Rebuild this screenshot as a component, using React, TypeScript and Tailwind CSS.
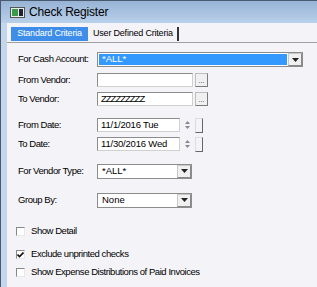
import { ReactNode } from 'react';

const font = { fontFamily: '"Liberation Sans", Arial, sans-serif' };

function Label({ children }: { children: ReactNode }) {
    return <div className="w-[79px] shrink-0 whitespace-nowrap text-[9.5px] tracking-[-0.45px] text-black">{children}</div>;
}

function DropArrow() {
    return (
        <div className="flex h-full w-[14px] items-center justify-center border border-[#c8c8c8] border-r-[#888] border-b-[#888] bg-[#f0f0f0]">
            <svg width="7" height="4" viewBox="0 0 7 4">
                <path d="M0 0h7L3.5 4z" fill="#222" />
            </svg>
        </div>
    );
}

function Select({ value, width, selected }: { value: string; width: string; selected?: boolean }) {
    return (
        <div className={`flex h-[15px] items-stretch border border-[#8c8c8c] bg-white ${width}`}>
            <div className="flex flex-1 items-center p-[1px]">
                <div className={`flex h-full flex-1 items-center whitespace-nowrap px-[3px] text-[9.5px] ${selected ? 'bg-[#3399ff] text-white' : 'text-black'}`}>
                    {value}
                </div>
            </div>
            <DropArrow />
        </div>
    );
}

function TextBox({ value, width, tight }: { value?: string; width: string; tight?: boolean }) {
    return (
        <div className={`flex h-[14px] items-center overflow-hidden whitespace-nowrap border border-[#8c8c8c] border-r-[#d0d0d0] border-b-[#d0d0d0] bg-white px-[3px] text-[9.5px] text-black ${tight ? 'tracking-[-1px]' : 'tracking-[-0.2px]'} ${width}`}>
            {value}
        </div>
    );
}

function DotsButton() {
    return (
        <div className="ml-[2px] flex h-[14px] w-[13px] items-end justify-center border border-[#bdbdbd] border-r-[#7a7a7a] border-b-[#7a7a7a] bg-[#f0f0f0] pb-[2px] text-[7px] leading-none text-[#333]">
            ...
        </div>
    );
}

function Spinner() {
    return (
        <div className="ml-[3px] flex items-center">
            <div className="flex w-[8px] flex-col items-center gap-[2px]">
                <svg width="5" height="3" viewBox="0 0 5 3"><path d="M0 3L2.5 0L5 3z" fill="#888" /></svg>
                <svg width="5" height="3" viewBox="0 0 5 3"><path d="M0 0h5L2.5 3z" fill="#888" /></svg>
            </div>
            <div className="ml-[4px] h-[15px] w-[8px] border-r border-b border-[#666] border-l border-l-[#ddd] border-t border-t-[#ddd]" />
        </div>
    );
}

function Check({ checked, label, className }: { checked?: boolean; label: string; className?: string }) {
    return (
        <div className={`flex h-[10px] items-center ${className ?? ''}`}>
            <div className="flex h-[9px] w-[9px] items-center justify-center border-l border-t border-[#888] border-r-[#e8e8e8] border-b-[#e8e8e8] border-r border-b bg-white">
                {checked && (
                    <svg width="7" height="6" viewBox="0 0 7 6">
                        <path d="M0.5 2.5L2.5 4.5L6.5 0.5" stroke="#111" strokeWidth="1.6" fill="none" />
                    </svg>
                )}
            </div>
            <span className="ml-[6px] whitespace-nowrap text-[9.5px] tracking-[-0.45px] text-black">{label}</span>
        </div>
    );
}

export default function App() {
    return (
        <div className="h-[287px] w-[317px] overflow-hidden bg-white" style={font}>
            <div className="flex h-full flex-col border-l border-t border-[#4a5a6e] bg-[#c3d6ec]">
                {/* Title bar */}
                <div className="flex h-[22px] shrink-0 items-center bg-gradient-to-b from-[#97b3d5] to-[#b9d0ea] pl-[9px]">
                    <div className="flex h-[11px] w-[15px] items-center border border-[#555] bg-[#e8ece8] px-[1px]">
                        <div className="h-[7px] w-[6px] bg-[#3a9a4a]" />
                        <div className="ml-[1px] h-[7px] w-[4px] bg-[#223]" />
                    </div>
                    <span className="ml-[4px] whitespace-nowrap text-[12px] tracking-[-0.2px] text-black">Check Register</span>
                </div>
                {/* Body */}
                <div className="ml-[6px] flex flex-1 flex-col bg-[#f4f3f7]">
                    {/* Tabs */}
                    <div className="flex h-[20px] shrink-0 items-end border-b border-[#a0a0a0] pl-[4px]">
                        <div className="mb-[1px] flex h-[14px] w-[77px] items-center justify-center whitespace-nowrap bg-[#3e8ee9] text-[9px] tracking-[-0.2px] text-white">
                            Standard Criteria
                        </div>
                        <div className="mb-[1px] ml-[3px] flex h-[14px] items-center whitespace-nowrap border-r-2 border-[#333] pl-[2px] pr-[4px] text-[9px] tracking-[-0.2px] text-black">
                            User Defined Criteria
                        </div>
                    </div>
                    {/* Form */}
                    <div className="flex flex-col pl-[11px] pt-[9px]">
                        <div className="flex items-center">
                            <Label>For Cash Account:</Label>
                            <Select value="*ALL*" width="w-[206px]" selected />
                        </div>
                        <div className="mt-[6px] flex items-center">
                            <Label>From Vendor:</Label>
                            <TextBox width="w-[96px]" />
                            <DotsButton />
                        </div>
                        <div className="mt-[5px] flex items-center">
                            <Label>To Vendor:</Label>
                            <TextBox width="w-[96px]" value="ZZZZZZZZZ" tight />
                            <DotsButton />
                        </div>
                        <div className="mt-[11px] flex items-center">
                            <Label>From Date:</Label>
                            <TextBox width="w-[83px]" value="11/1/2016 Tue" />
                            <Spinner />
                        </div>
                        <div className="mt-[4px] flex items-center">
                            <Label>To Date:</Label>
                            <TextBox width="w-[83px]" value="11/30/2016 Wed" />
                            <Spinner />
                        </div>
                        <div className="mt-[12px] flex items-center">
                            <Label>For Vendor Type:</Label>
                            <Select value="*ALL*" width="w-[95px]" />
                        </div>
                        <div className="mt-[14px] flex items-center">
                            <Label>Group By:</Label>
                            <Select value="None" width="w-[95px]" />
                        </div>
                        <div className="ml-[-2px] mt-[19px] flex flex-col">
                            <Check label="Show Detail" />
                            <Check label="Exclude unprinted checks" checked className="mt-[13px]" />
                            <Check label="Show Expense Distributions of Paid Invoices" className="mt-[8px]" />
                        </div>
                    </div>
                </div>
            </div>
        </div>
    );
}
